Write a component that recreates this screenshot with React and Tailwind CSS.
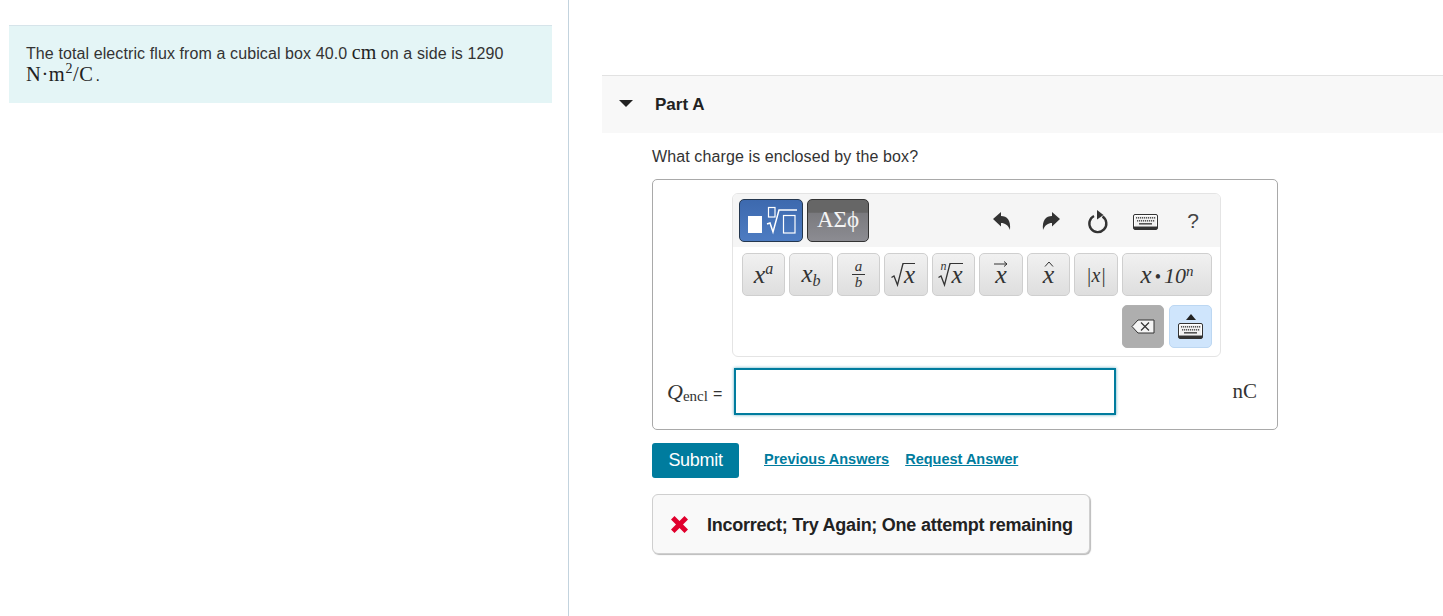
const sans = "font-['Liberation_Sans',Arial,sans-serif]";
const serif = "font-['Liberation_Serif','Times_New_Roman',serif]";

function MathBtn({ w = "w-[43px]", children }) {
  return (
    <div className={`${w} h-[43px] shrink-0 rounded-[5px] border border-[#cfcfcf] bg-gradient-to-b from-[#f1f1f1] to-[#dedede] flex items-center justify-center ${serif} italic text-[#333]`}>
      {children}
    </div>
  );
}

function SmallKeyboard({ className = "" }) {
  return (
    <svg width="25" height="16" viewBox="0 0 25 16" className={className}>
      <rect x="0.5" y="0.5" width="24" height="15" rx="1.5" fill="#fff" stroke="#333" />
      <rect x="2" y="2" width="21" height="10" fill="#f2f2f2" />
      {[3, 5, 7, 9, 11, 13, 15, 17, 19, 21].map((x) => (
        <rect key={x} x={x} y="3" width="1.2" height="1.6" fill="#555" />
      ))}
      {[4, 6, 8, 10, 12, 14, 16, 18, 20].map((x) => (
        <rect key={x} x={x} y="6" width="1.2" height="1.6" fill="#555" />
      ))}
      <rect x="6" y="9" width="13" height="1.6" fill="#555" />
      <rect x="1" y="12.5" width="23" height="2.5" fill="#333" />
    </svg>
  );
}

function Radical() {
  return (
    <svg width="13" height="24" viewBox="0 0 13 24" className="shrink-0">
      <path d="M0.5 14.5 L3 13 L6.5 22 L12 0.5 H13" fill="none" stroke="#333" strokeWidth="1.3" />
    </svg>
  );
}

export default function App() {
  return (
    <div className={`flex w-[1443px] h-[616px] overflow-hidden bg-white ${sans} text-[#333]`}>
      {/* left */}
      <div className="w-[569px] shrink-0 border-r border-[#c3d3de] pt-[25px] pl-[9px] pr-4 h-full">
        <div className="w-[543px] h-[78px] bg-[#e4f5f6] border-t border-[#d6e4ea] pl-[17px] pt-[16px] text-[16px] leading-[20px] text-[#333] tracking-[0.1px]">
          <div className="whitespace-nowrap h-[20px]">
            The total electric flux from a cubical box 40.0{" "}
            <span className={`${serif} text-[20px] leading-none text-[#222] tracking-[0px]`}>cm</span> on a side is 1290
          </div>
          <div className={`whitespace-nowrap ${serif} text-[20.5px] leading-[22px] tracking-[0.6px] text-[#222]`}>
            N·m<span className="text-[14px] leading-none align-[8px]">2</span>/C
            <span className={`${sans} text-[16px] ml-[2px]`}>.</span>
          </div>
        </div>
      </div>

      {/* right */}
      <div className="flex-1 pl-[33px] pt-[75px] min-w-0">
        <div className="h-[58px] bg-[#f8f8f8] border-t border-[#e2e2e2] flex items-center">
          <svg width="14" height="7" viewBox="0 0 14 7" className="ml-[17px] mt-[-2px]">
            <path d="M0 0 H14 L7 7 Z" fill="#222" />
          </svg>
          <span className="ml-[22px] text-[17px] font-bold text-[#222]">Part A</span>
        </div>

        <div className="pl-[50px] w-[676px]">
          <p className="mt-[14px] text-[16px] leading-[20px] text-[#333] tracking-[0.11px]">What charge is enclosed by the box?</p>

          {/* answer box */}
          <div className="mt-[12px] w-[626px] h-[251px] border border-[#a9a9a9] rounded-[5px] pt-[13px] pl-[14px] pr-[20px] flex flex-col">
            <div className="ml-[65px] w-[489px] h-[164px] border border-[#e4e4e4] rounded-[6px] overflow-hidden shrink-0">
              {/* top bar */}
              <div className="h-[53px] bg-[#f5f5f5] flex items-start pt-[5px] pl-[6px]">
                <div className="w-[64px] h-[43px] rounded-[5px] border border-[#24374f] overflow-hidden bg-gradient-to-b from-[#3d69ae] to-[#4d7cc2]">
                  <svg width="62" height="41" viewBox="0 0 62 41" className="block">
                    <rect x="8" y="16" width="14" height="17" fill="#fff" />
                    <rect x="28.5" y="7.5" width="6.5" height="9.5" fill="none" stroke="#fff" strokeWidth="1.2" />
                    <path d="M27 24 L30 23 L33 32 L39 10 H57" fill="none" stroke="#fff" strokeWidth="1.5" />
                    <rect x="43.5" y="15.5" width="11.5" height="17.5" fill="none" stroke="#fff" strokeWidth="1.2" />
                  </svg>
                </div>
                <div className={`ml-[4px] w-[62px] h-[43px] rounded-[5px] border border-[#333] bg-[linear-gradient(#666_0,#666_30%,#7a7a7e_32%,#8c8c92_100%)] flex items-center justify-center text-[#f4f4f4] text-[23px] ${serif}`}>
                  ΑΣϕ
                </div>
                <div className="ml-auto flex items-center h-[43px] mr-[21px] text-[#333]">
                  <svg width="19" height="19" viewBox="0 0 19 19" className="mr-[29px] mt-[2px]">
                    <path d="M0 7 L8 0 V4 C14 4 18 8 17 18 C15 13 12 11 8 11 V14.5 Z" fill="#333" />
                  </svg>
                  <svg width="19" height="19" viewBox="0 0 19 19" className="mr-[27px] mt-[2px]">
                    <path d="M19 7 L11 0 V4 C5 4 1 8 2 18 C4 13 7 11 11 11 V14.5 Z" fill="#333" />
                  </svg>
                  <svg width="22" height="24" viewBox="0 0 22 24" className="mr-[24px] mt-[2px]">
                    <path d="M7 6 A8.5 8.5 0 1 0 15.5 6.5" fill="none" stroke="#333" strokeWidth="2.4" />
                    <path d="M10 0 L16.5 5 L10 9.5 Z" fill="#333" />
                  </svg>
                  <SmallKeyboard className="mr-[29px] mt-[3px]" />
                  <span className="text-[21px] text-[#444]">?</span>
                </div>
              </div>
              {/* row 1 */}
              <div className="flex pl-[9px] pt-[6px] gap-[4px]">
                <MathBtn w="w-[43px]">
                  <span className="text-[26px] leading-none whitespace-nowrap">x<span className="text-[16px] leading-none align-[9px]">a</span></span>
                </MathBtn>
                <MathBtn w="w-[44px]">
                  <span className="text-[25px] leading-none whitespace-nowrap">x<span className="text-[16px] leading-none align-[-4px]">b</span></span>
                </MathBtn>
                <MathBtn w="w-[43px]">
                  <span className="flex flex-col items-center text-[15px] leading-[15px]">
                    <span>a</span>
                    <span className="w-[13px] h-px bg-[#333]" />
                    <span>b</span>
                  </span>
                </MathBtn>
                <MathBtn w="w-[44px]">
                  <span className="flex items-start h-[24px] -translate-x-[3px]">
                    <Radical />
                    <span className="border-t-[1.3px] border-[#333] text-[25px] leading-[22px]">x</span>
                  </span>
                </MathBtn>
                <MathBtn w="w-[43px]">
                  <span className="flex items-start h-[24px] relative -translate-x-[3px]">
                    <span className="text-[12px] leading-none absolute left-[2px] -top-[3px]">n</span>
                    <Radical />
                    <span className="border-t-[1.3px] border-[#333] text-[25px] leading-[22px]">x</span>
                  </span>
                </MathBtn>
                <MathBtn w="w-[44px]">
                  <span className="relative text-[26px] leading-none">
                    x
                    <svg width="14" height="6" viewBox="0 0 14 6" className="absolute -top-[1px] -left-[1px]">
                      <path d="M0 3 H13 M10 0.5 L13 3 L10 5.5" fill="none" stroke="#333" strokeWidth="1" />
                    </svg>
                  </span>
                </MathBtn>
                <MathBtn w="w-[43px]">
                  <span className="relative text-[26px] leading-none">
                    x
                    <svg width="10" height="6" viewBox="0 0 10 6" className="absolute -top-[1px] left-[1px]">
                      <path d="M1 5.5 L5 1 L9 5.5" fill="none" stroke="#333" strokeWidth="1" />
                    </svg>
                  </span>
                </MathBtn>
                <MathBtn w="w-[44px]"><span className="text-[20px]">|x|</span></MathBtn>
                <MathBtn w="w-[90px]">
                  <span className="text-[25px] leading-none whitespace-nowrap">x<span className="not-italic text-[18px] mx-[3px]">•</span><span className="text-[22px]">10</span><span className="text-[15px] leading-none align-[7px]">n</span></span>
                </MathBtn>
              </div>
              {/* row 2 */}
              <div className="flex justify-end pr-[8px] pt-[9px] gap-[5px]">
                <div className="w-[42px] h-[43px] rounded-[5px] border border-[#b0b0b0] bg-[#aeaeae] flex items-center justify-center">
                  <svg width="24" height="15" viewBox="0 0 24 15">
                    <path d="M1 7.5 L7 1 H23 V14 H7 Z" fill="#f5f5f5" stroke="#333" strokeWidth="1" />
                    <path d="M10 3.5 L18 11.5 M18 3.5 L10 11.5" stroke="#333" strokeWidth="1.2" />
                  </svg>
                </div>
                <div className="w-[43px] h-[43px] rounded-[5px] border border-[#bcd7f2] bg-[#cfe5fc] flex flex-col items-center justify-center gap-[3px]">
                  <svg width="10" height="6" viewBox="0 0 10 6"><path d="M0 6 L5 0 L10 6 Z" fill="#222" /></svg>
                  <SmallKeyboard />
                </div>
              </div>
            </div>

            {/* answer row */}
            <div className="flex items-center mt-[11px] h-[47px]">
              <div className={`w-[67px] shrink-0 flex items-baseline ${serif} text-[#333] whitespace-nowrap`}>
                <span className="italic text-[22px]">Q</span>
                <span className="text-[15px] leading-none translate-y-[2px]">encl</span>
                <span className={`${sans} text-[16px] ml-[5px]`}>=</span>
              </div>
              <div className="w-[382px] h-[47px] bg-white border-2 border-[#007c9e] shadow-[0_0_3px_#5ba9bf]" />
              <span className={`ml-auto ${serif} text-[21px] text-[#333]`}>nC</span>
            </div>
          </div>

          {/* actions */}
          <div className="flex items-center mt-[13px]">
            <div className="w-[87px] h-[35px] rounded-[3px] bg-[#007c9e] text-white text-[18px] tracking-[-0.3px] flex items-center justify-center">Submit</div>
            <span className="ml-[25px] text-[14.5px] font-bold text-[#007c9e] underline -translate-y-[1px]">Previous Answers</span>
            <span className="ml-[16px] text-[14.5px] font-bold text-[#007c9e] underline -translate-y-[1px]">Request Answer</span>
          </div>

          {/* feedback */}
          <div className="mt-[16px] w-[438px] h-[60px] rounded-[6px] border border-[#cfcfcf] bg-[#f9f9f9] shadow-[1px_1px_1px_#bbb] flex items-center">
            <svg width="17" height="17" viewBox="0 0 17 17" className="ml-[18px]">
              <path d="M3.5 0 L8.5 5 L13.5 0 L17 3.5 L12 8.5 L17 13.5 L13.5 17 L8.5 12 L3.5 17 L0 13.5 L5 8.5 L0 3.5 Z" fill="#e0002d" />
            </svg>
            <span className="ml-[19px] text-[18px] font-bold text-[#222] whitespace-nowrap tracking-[-0.25px] translate-y-[1px]">Incorrect; Try Again; One attempt remaining</span>
          </div>
        </div>
      </div>
    </div>
  );
}
